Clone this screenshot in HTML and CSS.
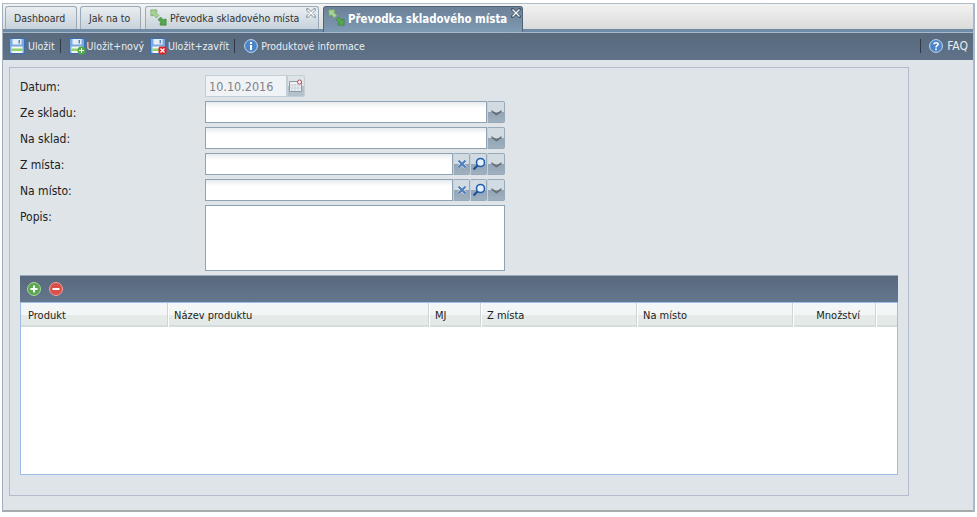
FILE: index.html
```html
<!DOCTYPE html>
<html lang="cs">
<head>
  <meta charset="UTF-8">
  <title>Převodka skladového místa</title>
  <link rel="stylesheet" href="styles.css">
</head>
<body>
  <svg class="defs" width="0" height="0">
    <symbol id="i-move" viewBox="0 0 20 20">
      <path d="M1 1h7v2.500H6.500l4 4-3 3-4-4V8H1z" fill="#a5d494" stroke="#6d9a64" stroke-width=".7"/>
      <path d="M19 19h-7v-2.500h1.500l-4-4 3-3 4 4V12H19z" fill="#57a84c" stroke="#37793a" stroke-width=".7"/>
    </symbol>
    <symbol id="i-save" viewBox="0 0 16 16">
      <path d="M.5.5h15v15H.5z" fill="#7aa8e0" stroke="#3a6fb5"/>
      <path d="M3.500 1h9v5.500h-9z" fill="#e6eef8"/>
      <path d="M9.500 2H11v3.500H9.500z" fill="#5c86b8"/>
      <path d="M2.500 8.500h11V15h-11z" fill="#f4f9ee"/>
      <path d="M2.500 10.500h11v2.500h-11z" fill="#93d070"/>
    </symbol>
    <symbol id="i-info" viewBox="0 0 14 14">
      <circle cx="7" cy="7" r="6.400" fill="#4b84c8" stroke="#c5d8ee"/>
      <path d="M6 3h2v2H6zM6 6h2v5H6z" fill="#fff"/>
    </symbol>
    <symbol id="i-help" viewBox="0 0 14 14">
      <circle cx="7" cy="7" r="6.400" fill="#4b84c8" stroke="#c5d8ee"/>
      <path d="M4.800 5.300C5 3.200 9.200 3.200 9.200 5.300 9.200 6.800 7 6.700 7 8.500" fill="none" stroke="#fff" stroke-width="1.500"/>
      <path d="M6.200 9.600h1.600v1.600H6.200z" fill="#fff"/>
    </symbol>
    <symbol id="i-arrow" viewBox="0 0 11 7">
      <path d="M.5 1l5 3.500 5-3.500v2l-5 3.500-5-3.500z" fill="#666b6f"/>
    </symbol>
    <symbol id="i-close" viewBox="0 0 10 10">
      <path d="M1.500 1.500l7 7m0-7l-7 7" stroke="currentColor" stroke-width="3" stroke-linecap="round"/>
      <path d="M1.500 1.500l7 7m0-7l-7 7" stroke="#fff" stroke-width="1.300"/>
    </symbol>
    <symbol id="i-clear" viewBox="0 0 10 10">
      <path d="M1.500 1.500l7 7m0-7l-7 7" stroke="#fff" stroke-opacity=".6" stroke-width="3.400"/>
      <path d="M1.500 1.500l7 7m0-7l-7 7" stroke="#4f7fba" stroke-width="2.200"/>
    </symbol>
    <symbol id="i-search" viewBox="0 0 14 14">
      <circle cx="8.500" cy="5.500" r="4" fill="#e6f0fa" stroke="#1f5fae" stroke-width="1.600"/>
      <path d="M5.500 8.500L1.500 12.500" stroke="#1f4f94" stroke-width="2.200"/>
    </symbol>
  </svg>

  <div class="window">
    <div class="tabs">
      <div class="tab tab-dash">Dashboard</div>
      <div class="tab tab-how">Jak na to</div>
      <div class="tab tab-doc">
        <svg class="tab-move"><use href="#i-move"/></svg>
        Převodka skladového místa
        <svg class="tab-close"><use href="#i-close"/></svg>
      </div>
      <div class="tab tab-doc tab-active">
        <svg class="tab-move"><use href="#i-move"/></svg>
        Převodka skladového místa
        <svg class="tab-close"><use href="#i-close"/></svg>
      </div>
    </div>

    <div class="toolbar">
      <a class="tool"><svg class="ico"><use href="#i-save"/></svg>Uložit</a>
      <span class="sep"></span>
      <a class="tool tool-new">
        <span class="ico-wrap">
          <svg class="ico"><use href="#i-save"/></svg>
          <svg class="badge" viewBox="0 0 9 9"><circle cx="4.500" cy="4.500" r="4" fill="#55a84a"/><path d="M2 4h2V2h1v2h2v1H5v2H4V5H2z" fill="#fff"/></svg>
        </span>
        Uložit+nový
      </a>
      <a class="tool tool-close">
        <span class="ico-wrap">
          <svg class="ico"><use href="#i-save"/></svg>
          <svg class="badge" viewBox="0 0 9 9"><rect x=".5" y=".5" width="8" height="8" rx="2" fill="#d8262c"/><path d="M2.500 2.500l4 4m0-4l-4 4" stroke="#fff" stroke-width="1.300"/></svg>
        </span>
        Uložit+zavřít
      </a>
      <span class="sep"></span>
      <a class="tool tool-info"><svg class="ico-sm"><use href="#i-info"/></svg>Produktové informace</a>
      <span class="sep sep-faq"></span>
      <a class="tool tool-faq"><svg class="ico-sm"><use href="#i-help"/></svg>FAQ</a>
    </div>

    <div class="content">
      <div class="fieldset">
        <div class="row">
          <label>Datum:</label>
          <div class="field field-date">
            <div class="input input-off">10.10.2016</div>
            <span class="trigger trigger-off">
              <svg width="14" height="14" viewBox="0 0 14 14"><path d="M.5 2.500h12v10H.5z" fill="#eef1f4" stroke="#8d9aa6"/><path d="M3 5v7M6 5v7M9 5v7M1 6h11M1 9h11" stroke="#c8d0d8"/><circle cx="10.500" cy="3" r="2" fill="#fff" stroke="#b8474f"/></svg>
            </span>
          </div>
        </div>
        <div class="row">
          <label>Ze skladu:</label>
          <div class="field">
            <div class="input"></div>
            <span class="trigger"><svg class="arrow"><use href="#i-arrow"/></svg></span>
          </div>
        </div>
        <div class="row">
          <label>Na sklad:</label>
          <div class="field">
            <div class="input"></div>
            <span class="trigger"><svg class="arrow"><use href="#i-arrow"/></svg></span>
          </div>
        </div>
        <div class="row">
          <label>Z místa:</label>
          <div class="field">
            <div class="input"></div>
            <span class="trigger trigger-sm"><svg class="clear"><use href="#i-clear"/></svg></span>
            <span class="trigger trigger-sm"><svg class="search"><use href="#i-search"/></svg></span>
            <span class="trigger"><svg class="arrow"><use href="#i-arrow"/></svg></span>
          </div>
        </div>
        <div class="row">
          <label>Na místo:</label>
          <div class="field">
            <div class="input"></div>
            <span class="trigger trigger-sm"><svg class="clear"><use href="#i-clear"/></svg></span>
            <span class="trigger trigger-sm"><svg class="search"><use href="#i-search"/></svg></span>
            <span class="trigger"><svg class="arrow"><use href="#i-arrow"/></svg></span>
          </div>
        </div>
        <div class="row row-text">
          <label>Popis:</label>
          <div class="textarea"></div>
        </div>

        <div class="grid">
          <div class="grid-tools">
            <svg class="round" viewBox="0 0 14 14"><circle cx="7" cy="7" r="6.500" fill="#5aa84e" stroke="#a9d39f"/><path d="M3.500 6h2.500V3.500h2V6h2.500v2H8v2.500H6V8H3.500z" fill="#fff"/></svg>
            <svg class="round" viewBox="0 0 14 14"><circle cx="7" cy="7" r="6.500" fill="#dc4f48" stroke="#eba5a0"/><path d="M3.500 6h7v2h-7z" fill="#fff"/></svg>
          </div>
          <div class="grid-head">
            <div class="col col-first">Produkt</div>
            <div class="col">Název produktu</div>
            <div class="col">MJ</div>
            <div class="col">Z místa</div>
            <div class="col">Na místo</div>
            <div class="col col-num">Množství</div>
            <div class="col"></div>
          </div>
          <div class="grid-body"></div>
        </div>
      </div>
    </div>
  </div>
</body>
</html>
```

FILE: styles.css
```css
html, body {
  margin: 0;
  padding: 0;
  background: #fff;
}

body {
  font-family: "DejaVu Sans Condensed", "DejaVu Sans", "Liberation Sans", sans-serif;
  font-stretch: condensed;
  font-size: 12px;
  color: #222;
  overflow: hidden;
}

.defs {
  display: block;
  height: 0;
}

.window {
  width: 970px;
  height: 508px;
  margin: 3px 0 0 2px;
  display: flex;
  flex-direction: column;
  border-top: 1px solid #b0bccb;
  border-left: 1px solid #9fb0c2;
  border-right: 2px solid #a9b9ca;
}

/* tabs */
.tabs {
  height: 25px;
  flex: none;
  display: flex;
  align-items: flex-end;
  padding-left: 2px;
  background: linear-gradient(to bottom, #f3f3f2, #d9dbda);
  border-bottom: 3px solid #6f8ba6;
}

.tab {
  box-sizing: border-box;
  height: 23px;
  line-height: 23px;
  padding-left: 8px;
  font-size: 10.500px;
  background: linear-gradient(to bottom, #e9eef1, #c8d2db);
  border: 1px solid #9aaab9;
  border-bottom: 0;
  border-radius: 3px 3px 0 0;
  color: #333;
  white-space: nowrap;
}

.tab-dash {
  width: 72px;
}

.tab-how {
  width: 61px;
  margin-left: 3px;
}

.tab-doc {
  width: 174px;
  margin-left: 4px;
  padding-left: 0;
  display: flex;
  align-items: center;
  position: relative;
}

.tab-active {
  width: 200px;
  height: 26px;
  margin-bottom: -3px;
  font-size: 11.400px;
  background: linear-gradient(to bottom, #6b8198, #7f9ab3);
  border-color: #4f647a;
  color: #fff;
  font-weight: bold;
}

.tab-move {
  width: 17px;
  height: 17px;
  margin: 2px 3px 0 4px;
  flex: none;
  align-self: flex-start;
}

.tab-close {
  position: absolute;
  top: 1px;
  right: 2px;
  width: 10px;
  height: 10px;
  color: #8f9aa3;
}

.tab-active .tab-close {
  right: 1px;
  color: #3f5062;
}

/* toolbar */
.toolbar {
  height: 26px;
  padding-bottom: 1px;
  flex: none;
  display: flex;
  align-items: center;
  padding-left: 6px;
  font-size: 10.500px;
  background: linear-gradient(to bottom, #596a7e, #5f7288);
  border-top: 1px solid #a5b9cb;
  color: #e8edf1;
}

.tool {
  display: flex;
  align-items: center;
  white-space: nowrap;
  gap: 3px;
}

.ico, .ico-wrap {
  width: 16px;
  height: 16px;
  display: block;
  flex: none;
}

.ico-wrap {
  position: relative;
}

.badge {
  position: absolute;
  right: -1px;
  bottom: -1px;
  width: 9px;
  height: 9px;
}

.ico-sm {
  width: 14px;
  height: 14px;
  flex: none;
  margin-right: 1px;
}

.sep {
  width: 1px;
  height: 14px;
  margin: 0 8px 0 5px;
  background: #2f3a46;
}

.tool-new, .tool-close, .tool-info {
  gap: 2px;
}

.tool-close {
  margin-left: 6px;
}

.tool-info {
  margin-left: 1px;
}

.sep-faq {
  margin-left: auto;
}

.tool-faq {
  margin-right: 5px;
  font-size: 12px;
}

/* form */
.content {
  flex: 1;
  padding: 7px 0 0 6px;
  background: #dee4e8;
  border-bottom: 2px solid #a5abab;
}

.fieldset {
  width: 898px;
  padding-top: 7px;
  height: 420px;
  border: 1px solid #b5bbcf;
}

.row {
  display: flex;
  height: 22px;
  margin: 0 0 4px 10px;
}

.row label {
  width: 185px;
  flex: none;
  line-height: 24px;
}

.row-text {
  height: 66px;
}

.field {
  width: 300px;
  display: flex;
}

.field-date {
  width: 100px;
}

.input {
  flex: 1;
  border: 1px solid #8fa3b5;
  background: linear-gradient(to bottom, #e6ebee, #fff 6px);
}

.input-off {
  padding-left: 3px;
  line-height: 22px;
  font-size: 12.500px;
  color: #84828a;
  background: #eff3f5;
  border-color: #c3ced7;
}

.trigger {
  width: 16px;
  flex: none;
  display: flex;
  align-items: center;
  justify-content: center;
  border: 1px solid #98a9b9;
  border-left-color: #c4d0da;
  border-radius: 0 2px 2px 0;
  background: linear-gradient(to bottom, #d3dbe2 0, #d3dbe2 50%, #92a4b5 50%, #9fb0bf 100%);
}

.trigger-sm {
  width: 15px;
}

.trigger-off {
  border-color: #c3ced7;
  background: linear-gradient(to bottom, #dde3e8 0, #dde3e8 50%, #b3c1cd 50%, #b3c1cd 100%);
}

.arrow {
  width: 11px;
  height: 7px;
}

.clear {
  width: 10px;
  height: 10px;
}

.search {
  width: 14px;
  height: 14px;
}

.textarea {
  width: 298px;
  height: 64px;
  border: 1px solid #8fa3b5;
  background: #fff;
}

/* grid */
.grid {
  width: 878px;
  height: 200px;
  margin-left: 10px;
  display: flex;
  flex-direction: column;
}

.grid-tools {
  height: 27px;
  flex: none;
  display: flex;
  align-items: center;
  gap: 8px;
  padding-left: 7px;
  box-sizing: border-box;
  border-top: 1px solid #9aa9b8;
  background: linear-gradient(to bottom, #58697d, #64778e);
}

.round {
  width: 14px;
  height: 14px;
}

.grid-head {
  height: 24px;
  flex: none;
  display: grid;
  grid-template-columns: 147px 261px 52px 156px 156px 83px 1fr;
  border: 1px solid #9dbde6;
  border-bottom: 0;
  background: linear-gradient(to bottom, #f3f6f7 50%, #e4eae7 50%);
  box-shadow: inset 0 -2px 0 #d5dcdc;
}

.col {
  padding-left: 6px;
  line-height: 25px;
  font-size: 11px;
  color: #222;
  border-right: 1px solid #d0d5d5;
  box-shadow: 1px 0 0 #fff;
}

.col-first {
  padding-left: 7px;
}

.col:last-child {
  border-right: 0;
  box-shadow: none;
}

.col-num {
  padding: 0 15px 0 0;
  text-align: right;
}

.grid-body {
  flex: 1;
  background: #fff;
  border: 1px solid #9dbde6;
  border-top: 0;
}
```
